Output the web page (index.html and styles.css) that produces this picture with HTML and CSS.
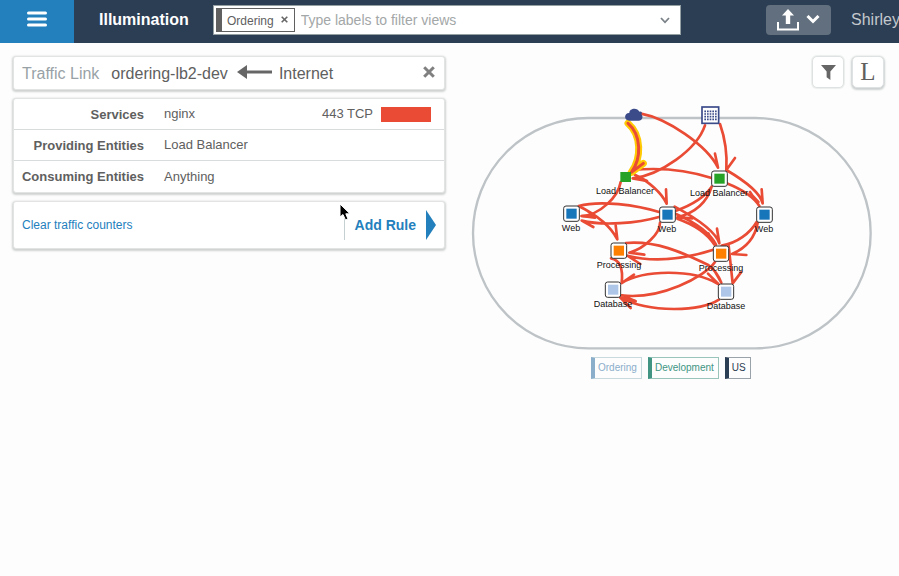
FILE: index.html
```html
<!DOCTYPE html>
<html lang="en">
<head>
<meta charset="utf-8">
<title>Illumination</title>
<link rel="stylesheet" href="styles.css">
</head>
<body>
<header class="topbar">
  <button class="menu" type="button" aria-label="Menu">
    <svg width="20" height="16" viewBox="0 0 20 16"><path d="M1.500 2H18.500M1.500 8H18.500M1.500 14H18.500" stroke="#fff" stroke-width="3" stroke-linecap="round"/></svg>
  </button>
  <h1 class="title">Illumination</h1>
  <div class="search">
    <span class="chip">Ordering
      <button class="chip-close" type="button" aria-label="Remove Ordering"><svg width="7" height="7" viewBox="0 0 7 7"><path d="M.7.7 6.300 6.300M6.300.7.7 6.300" stroke="#666" stroke-width="1.600"/></svg></button>
    </span>
    <input class="search-input" type="text" aria-label="Filter views" placeholder="Type labels to filter views">
    <button class="search-open" type="button" aria-label="Show labels"><svg width="10" height="7" viewBox="0 0 10 7"><path d="M1 1 5 5.300 9 1" fill="none" stroke="#7a8288" stroke-width="1.800"/></svg></button>
  </div>
  <button class="export" type="button" aria-label="Export">
    <svg width="22" height="22" viewBox="0 0 22 22"><path d="M1 13V20.500H21V13" fill="none" stroke="#fff" stroke-width="2"/><path d="M11 0 17 6.500H13.200V15H8.800V6.500H5Z" fill="#fff"/></svg>
    <svg width="14" height="10" viewBox="0 0 14 10"><path d="M1.500 1 7 6.500 12.500 1" fill="none" stroke="#fff" stroke-width="3"/></svg>
  </button>
  <a class="user" href="#">Shirley</a>
</header>

<main class="main">
  <section class="details">
    <div class="panel link-head">
      <span class="link-kind">Traffic Link</span>
      <span class="link-name">ordering-lb2-dev</span>
      <svg class="link-arrow" width="36" height="16" viewBox="0 0 36 16"><path d="M8 8H35" stroke="#666" stroke-width="3"/><path d="M0 8 10 1V15Z" fill="#666"/></svg>
      <span class="link-name">Internet</span>
      <button class="close" type="button" aria-label="Close"><svg width="12" height="12" viewBox="0 0 12 12"><path d="M1.200 1.200 10.800 10.800M10.800 1.200 1.200 10.800" stroke="#808080" stroke-width="3"/></svg></button>
    </div>
    <table class="panel facts">
      <tr><th scope="row">Services</th><td><div class="service"><span>nginx</span><span class="port">443 TCP</span><span class="swatch"></span></div></td></tr>
      <tr><th scope="row">Providing Entities</th><td>Load Balancer</td></tr>
      <tr><th scope="row">Consuming Entities</th><td>Anything</td></tr>
    </table>
    <div class="panel actions">
      <a class="clear" href="#">Clear traffic counters</a>
      <button class="add-rule" type="button">Add Rule<svg width="10" height="30" viewBox="0 0 10 30"><path d="M0 0 10 15 0 30Z" fill="#2380bd"/></svg></button>
      <svg class="cursor" width="13" height="19" viewBox="0 0 13 19"><path d="M1 1V14L4 11.500 6.500 17 9 16 6.800 10.800H11Z" fill="#000" stroke="#fff" stroke-width="1"/></svg>
    </div>
  </section>

  <section class="map">
    <div class="tools">
      <button class="tool" type="button" aria-label="Filter"><svg width="15" height="15" viewBox="0 0 16 16"><path d="M0 0H16L10 7V16L6 13V7Z" fill="#666"/></svg></button>
      <button class="tool tool-raised" type="button" aria-label="Legend">L</button>
    </div>
    <svg class="graph" width="439" height="260" viewBox="0 0 439 260" role="img" aria-label="Traffic map">
      <svg width="439" height="260" viewBox="0 0 1317 780">
        <rect x="39" y="54" width="1193" height="691" rx="346" fill="none" stroke="#bdc3c6" stroke-width="7"/>
        <g fill="none" stroke="#e94b35" stroke-width="8" stroke-linecap="round" stroke-linejoin="round">
          <path d="M543 41C620 55 740 135 774 203M765 161 774 203"/>
          <path d="M735 76C710 150 600 225 518 235L561 243"/>
          <path d="M780 72C797 120 802 160 799 210L825 174"/>
          <path d="M755 234C680 210 600 202 518 210"/>
          <path d="M524 224C565 243 605 278 620 311L618 268M524 224 560 243"/>
          <path d="M482 246C475 290 420 345 365 348L405 353"/>
          <path d="M799 210C850 240 900 275 908 310L905 268M800 250C850 270 880 290 898 318L870 276M895 306 878 288"/>
          <path d="M755 260C735 290 695 315 648 332M755 260C740 310 700 340 652 352L697 355"/>
          <path d="M600 337C530 315 420 300 356 318C400 340 450 375 472 418L467 376M365 348 408 350 385 335"/>
          <path d="M600 350C530 370 430 378 365 362L400 381"/>
          <path d="M600 368C600 400 555 445 508 458L553 464"/>
          <path d="M644 320C700 350 765 390 778 430L771 386M648 342C700 365 748 395 768 434M652 356C705 375 745 405 763 434L745 400"/>
          <path d="M890 366C870 400 830 430 785 437M893 368C885 415 855 445 816 462L859 465"/>
          <path d="M760 449C680 475 590 490 502 467L541 492"/>
          <path d="M498 429C600 420 690 470 745 495C762 508 775 525 784 548L765 515"/>
          <path d="M453 475C480 480 490 505 485 549L522 524M485 549C550 510 695 505 775 552L744 521"/>
          <path d="M765 486C735 530 600 600 485 586L527 604"/>
          <path d="M806 438 818 550 843 517"/>
          <path d="M777 599C720 635 570 640 480 592L512 624M480 592 525 603"/>
        </g>
        <g fill="none" stroke-linecap="round" stroke-linejoin="round">
          <path d="M504 70C545 105 545 175 514 217L550 190" stroke="#ffcb05" stroke-width="21"/>
          <path d="M504 70C545 105 545 175 514 217L550 190" stroke="#e94b35" stroke-width="9"/>
        </g>
        <path d="M509 62C490 62 492 38 508 39C507 24 533 21 538 35C545 33 548 40 544 43C551 50 547 62 536 62Z" fill="#3b4a89"/>
        <rect x="726" y="21" width="50" height="49" fill="#fff" stroke="#3b4a89" stroke-width="5"/>
        <path d="M733 34H770M733 42H770M733 50H770M733 58H770" stroke="#3b4a89" stroke-width="5" stroke-dasharray="5 3"/>
        <rect x="481" y="216" width="32" height="30" fill="#26a326"/>
        <g fill="#fff" stroke="#333" stroke-width="3">
          <rect x="755" y="213" width="47" height="46" rx="7"/>
          <rect x="311" y="318" width="47" height="46" rx="7"/>
          <rect x="599" y="321" width="47" height="46" rx="7"/>
          <rect x="890" y="321" width="47" height="46" rx="7"/>
          <rect x="453" y="429" width="47" height="46" rx="7"/>
          <rect x="760" y="438" width="46" height="46" rx="7"/>
          <rect x="436" y="546" width="46" height="46" rx="7"/>
          <rect x="775" y="552" width="46" height="46" rx="7"/>
        </g>
        <rect x="763" y="221" width="31" height="30" fill="#26a326"/>
        <g fill="#1775b9"><rect x="319" y="326" width="31" height="30"/><rect x="607" y="329" width="31" height="30"/><rect x="898" y="329" width="31" height="30"/></g>
        <g fill="#ff8000"><rect x="461" y="437" width="31" height="30"/><rect x="768" y="446" width="31" height="30"/></g>
        <g fill="#aec7e8"><rect x="444" y="554" width="31" height="30"/><rect x="783" y="560" width="31" height="30"/></g>
      </svg>
      <g class="node-label">
        <text x="165" y="94">Load Balancer</text>
        <text x="259" y="96">Load Balancer</text>
        <text x="111" y="131">Web</text>
        <text x="207" y="132">Web</text>
        <text x="304" y="132">Web</text>
        <text x="159" y="168">Processing</text>
        <text x="261" y="171">Processing</text>
        <text x="153" y="207">Database</text>
        <text x="266" y="209">Database</text>
      </g>
    </svg>
    <div class="tags">
      <span class="tag tag-app">Ordering</span>
      <span class="tag tag-env">Development</span>
      <span class="tag tag-loc">US</span>
    </div>
  </section>
</main>
</body>
</html>
```
FILE: styles.css
```css
* { box-sizing: border-box; }

body {
  margin: 0;
  background: #fdfdfd;
  color: #606060;
  font: 13px/16px "Liberation Sans", Arial, sans-serif;
}

button {
  padding: 0;
  border: 0;
  background: none;
  color: inherit;
  font: inherit;
}

a { text-decoration: none; }
svg { display: block; }

.topbar {
  display: flex;
  align-items: center;
  height: 43px;
  padding-bottom: 3px;
  overflow: hidden;
  background: #2c3e54;
}

.menu {
  display: flex;
  flex: none;
  align-items: center;
  justify-content: center;
  width: 74px;
  height: 43px;
  margin-bottom: -3px;
  padding-bottom: 5px;
  background: #2380bd;
}

.title {
  flex: none;
  width: 114px;
  margin: 0 0 0 25px;
  color: #fff;
  font-size: 16px;
  line-height: 20px;
}

.search {
  display: flex;
  flex: 1;
  align-items: center;
  min-width: 0;
  height: 30px;
  padding: 0 10px 0 2px;
  border: 1px solid #95a0a4;
  background: #fff;
}

.chip {
  display: flex;
  flex: none;
  align-items: center;
  gap: 7px;
  height: 24px;
  padding: 2px 6px 0 5px;
  border: 1px solid #606060;
  border-left-width: 6px;
  font-size: 12px;
}

.chip-close { margin-bottom: 3px; }

.search-input {
  flex: 1;
  min-width: 0;
  padding: 0 6px;
  border: 0;
  background: none;
  font: 14px/20px "Liberation Sans", Arial, sans-serif;
}

.search-input::placeholder { color: #a3a7a7; }

.export {
  display: flex;
  flex: none;
  align-items: center;
  justify-content: center;
  gap: 7px;
  width: 65px;
  height: 30px;
  margin: 0 20px 0 85px;
  border-radius: 4px;
  background: #626f7e;
}

.user {
  flex: none;
  width: 48px;
  color: #c3c8cd;
  font-size: 16px;
  line-height: 20px;
}

.main {
  display: grid;
  grid-template-columns: minmax(0, 432px) minmax(439px, 1fr);
  column-gap: 15px;
  padding: 13px 0 0 13px;
}

.details {
  display: flex;
  flex-direction: column;
  gap: 8px;
}

.panel {
  border: 1px solid #e2e3e3;
  border-radius: 3px;
  background: #fff;
  box-shadow: 0 1px 2px 1px #d0d2d2;
}

.link-head {
  display: flex;
  align-items: center;
  height: 34px;
  padding: 2px 9px 0 8px;
  font-size: 16px;
}

.link-kind { margin-right: 12px; color: #98a2a6; }
.link-arrow { margin: 0 6px 4px 9px; }
.close { margin: 0 0 4px auto; }

.facts {
  width: 100%;
  border-spacing: 0;
}

.facts th,
.facts td {
  height: 31px;
  padding: 0 13px 0 20px;
  border-bottom: 1px solid #d8dcdc;
}

.facts th {
  width: 130px;
  padding: 1px 0 0;
  text-align: right;
}

.facts tr:last-child > * { border-bottom: 0; }

.service { display: flex; align-items: center; }
.port { margin-left: auto; }

.swatch {
  width: 50px;
  height: 15px;
  margin-left: 8px;
  background: #e94b35;
}

.actions {
  position: relative;
  display: flex;
  align-items: center;
  justify-content: space-between;
  height: 48px;
  padding: 0 8px;
}

.clear { color: #2380bd; font-size: 12px; }

.add-rule {
  display: flex;
  align-items: center;
  gap: 10px;
  padding-left: 10px;
  border-left: 1px solid #c5d0d3;
  color: #2380bd;
  font-size: 14px;
  font-weight: bold;
}

.cursor {
  position: absolute;
  top: 1px;
  left: 325px;
}

.tools {
  display: flex;
  justify-content: flex-end;
  gap: 8px;
  padding-right: 15px;
}

.tool {
  display: flex;
  align-items: center;
  justify-content: center;
  width: 32px;
  height: 32px;
  border: 1px solid #dfe2e2;
  border-radius: 5px;
  background: #fff;
  box-shadow: 0 0 1px 1px #eceeee;
  font: 25px/30px "Liberation Serif", serif;
}

.tool-raised { box-shadow: 0 1px 2px 1px #ccd0d0; }

.graph { margin-top: 12px; }

.node-label {
  fill: #111;
  font-size: 9px;
  text-anchor: middle;
}

.tags {
  display: flex;
  gap: 6px;
  margin: -3px 0 0 131px;
}

.tag {
  height: 22px;
  padding: 0 4px 0 3px;
  border: 1px solid;
  border-left-width: 4px;
  font-size: 10px;
  line-height: 20px;
}

.tag-app { border-color: #c8dadd; border-left-color: #8baecb; color: #8baecb; }
.tag-env { border-color: #99c4bc; border-left-color: #429583; color: #429583; }
.tag-loc { border-color: #9aa2aa; border-left-color: #2c3e54; color: #2c3e54; }
```
